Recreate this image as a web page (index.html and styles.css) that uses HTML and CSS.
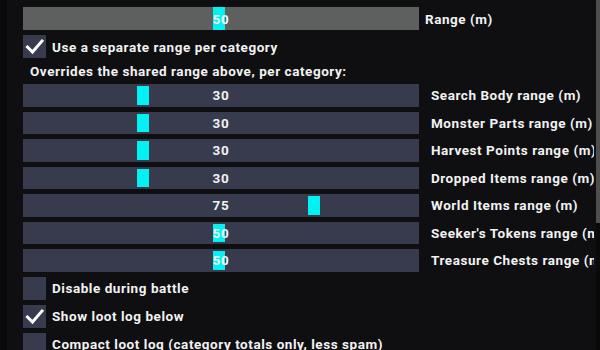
FILE: index.html
```html
<!DOCTYPE html>
<html>
<head>
<meta charset="utf-8">
<link rel="stylesheet" href="styles.css">
</head>
<body>
<div class="window">
  <div class="content">
    <div class="row">
      <div class="slider slider-main">
        <div class="grab" style="left:190px"></div>
        <span class="val">50</span>
      </div>
      <span class="label label-main">Range (m)</span>
    </div>
    <div class="row">
      <div class="check"><svg viewBox="0 0 23 23" class="tick"><path d="M4.5 12 L9.5 17 L19 6"/></svg></div>
      <span class="clabel">Use a separate range per category</span>
    </div>
    <div class="note">Overrides the shared range above, per category:</div>
    <div class="row">
      <div class="slider"><div class="grab" style="left:114px"></div><span class="val">30</span></div>
      <span class="label">Search Body range (m)</span>
    </div>
    <div class="row">
      <div class="slider"><div class="grab" style="left:114px"></div><span class="val">30</span></div>
      <span class="label">Monster Parts range (m)</span>
    </div>
    <div class="row">
      <div class="slider"><div class="grab" style="left:114px"></div><span class="val">30</span></div>
      <span class="label">Harvest Points range (m)</span>
    </div>
    <div class="row">
      <div class="slider"><div class="grab" style="left:114px"></div><span class="val">30</span></div>
      <span class="label">Dropped Items range (m)</span>
    </div>
    <div class="row">
      <div class="slider"><div class="grab" style="left:285px"></div><span class="val">75</span></div>
      <span class="label">World Items range (m)</span>
    </div>
    <div class="row">
      <div class="slider"><div class="grab" style="left:190px"></div><span class="val">50</span></div>
      <span class="label">Seeker's Tokens range (m)</span>
    </div>
    <div class="row">
      <div class="slider"><div class="grab" style="left:190px"></div><span class="val">50</span></div>
      <span class="label">Treasure Chests range (m)</span>
    </div>
    <div class="row">
      <div class="check"></div>
      <span class="clabel">Disable during battle</span>
    </div>
    <div class="row">
      <div class="check"><svg viewBox="0 0 23 23" class="tick"><path d="M4.5 12 L9.5 17 L19 6"/></svg></div>
      <span class="clabel">Show loot log below</span>
    </div>
    <div class="row">
      <div class="check"></div>
      <span class="clabel">Compact loot log (category totals only, less spam)</span>
    </div>
  </div>
  <div class="scrollbar"><div class="thumb"></div></div>
</div>
</body>
</html>
```

FILE: styles.css
```css
html, body {
  margin: 0;
  padding: 0;
  background: #0d0d0f;
  overflow: hidden;
}
.window {
  width: 600px;
  height: 350px;
  display: flex;
  background: linear-gradient(to right, #09090a 0, #09090a 7px, #0f0f11 7px);
  font-family: Roboto, "Liberation Sans", sans-serif;
  font-weight: 700;
  font-size: 13.5px;
  letter-spacing: 0.55px;
  color: #f2f2f2;
  overflow: hidden;
}
.content {
  width: 571px;
  padding: 7px 0 0 23px;
  display: flex;
  flex-direction: column;
  gap: 5px;
  overflow: hidden;
  flex: none;
}
.row {
  display: flex;
  align-items: center;
  white-space: nowrap;
  flex: none;
}
.slider {
  position: relative;
  width: 396px;
  height: 22.5px;
  background: #383a4e;
  display: flex;
  align-items: center;
  justify-content: center;
  flex: none;
}
.slider-main {
  height: 23px;
  background: #5e5f5f;
}
.grab {
  position: absolute;
  top: 2px;
  bottom: 2px;
  width: 12px;
  background: #00f2f2;
}
.slider-main .grab {
  top: 0;
  bottom: 0;
}
.val {
  position: relative;
  letter-spacing: 0.8px;
}
.label {
  margin-left: 12px;
}
.label-main {
  margin-left: 6px;
}
.check {
  width: 23px;
  height: 23px;
  background: #383a4e;
  flex: none;
}
.tick {
  display: block;
  width: 23px;
  height: 23px;
}
.tick path {
  fill: none;
  stroke: #ffffff;
  stroke-width: 3;
  stroke-linecap: square;
}
.clabel {
  margin-left: 6px;
}
.note {
  height: 16px;
  line-height: 16px;
  padding-left: 7px;
  white-space: nowrap;
  flex: none;
}
.scrollbar {
  margin-left: auto;
  width: 4px;
  height: 350px;
  background: #0a0a0a;
  flex: none;
}
.thumb {
  height: 223px;
  background: #4e4e4e;
}
```
